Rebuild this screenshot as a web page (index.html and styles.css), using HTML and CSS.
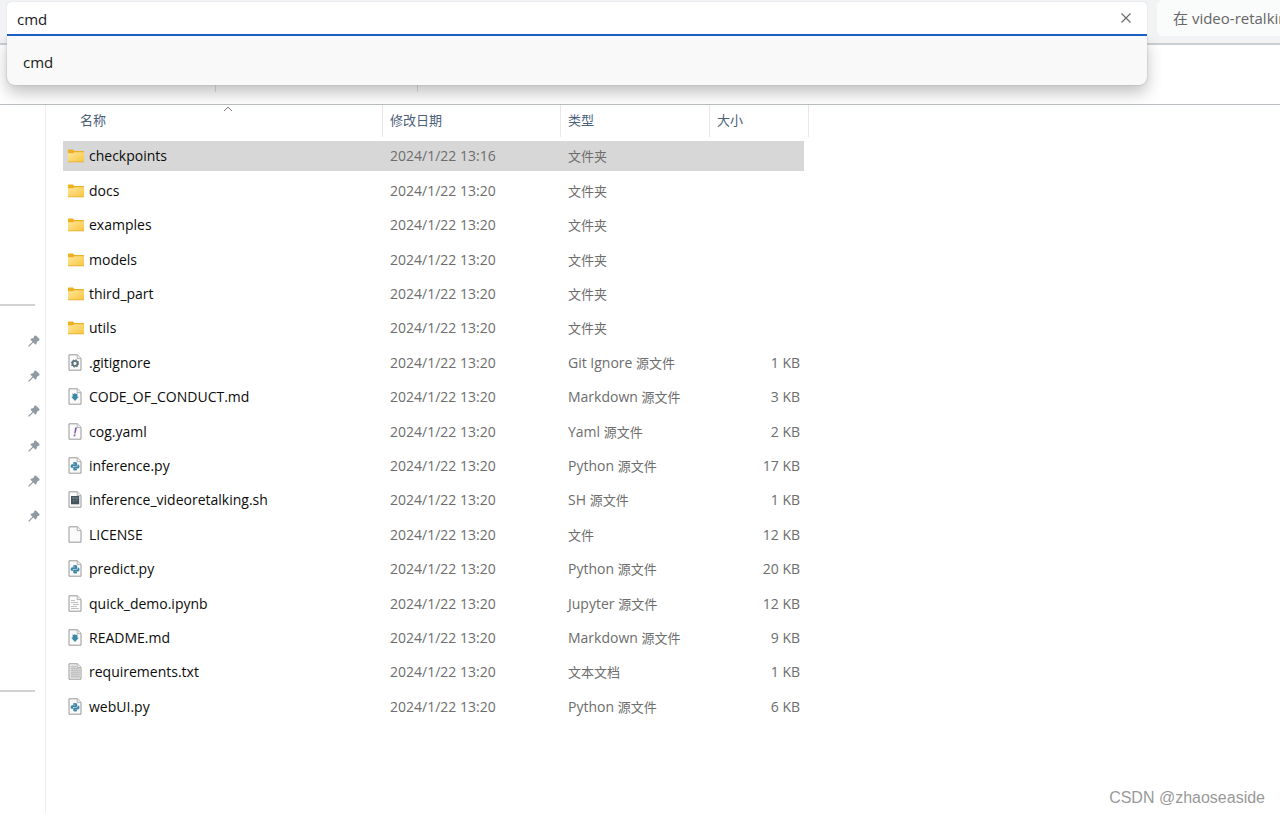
FILE: index.html
```html
<!DOCTYPE html>
<html lang="zh-CN">
<head>
<meta charset="utf-8">
<title>video-retalking</title>
<link rel="stylesheet" href="styles.css">
</head>
<body>
<svg class="defs" aria-hidden="true">
  <defs>
    <linearGradient id="gold" x1="0" y1="0" x2="1" y2="1">
      <stop offset="0" stop-color="#ffe69a"/><stop offset="1" stop-color="#f8c63f"/>
    </linearGradient>
    <symbol id="folder" viewBox="0 0 16 14">
      <path d="M0 1.2Q0 .5.8.5H5l1.3 1.6H15.4Q16 2.1 16 2.8V6H0z" fill="#eeb01f"/>
      <path d="M0 4.2H5.2L6.4 3.2H16V12.6Q16 13 15.6 13H.4Q0 13 0 12.6z" fill="url(#gold)"/>
      <path d="M0 12.5H16V12.7Q16 13.3 15.4 13.3H.6Q0 13.3 0 12.7z" fill="#e3a92b"/>
    </symbol>
    <symbol id="page" viewBox="0 0 14 17">
      <path d="M1 .8H9.4L13 4.4V16.2H1z" fill="#fbfbfb" stroke="#989898"/>
      <path d="M9.2 1V4.6H13" fill="#eee" stroke="#a4a4a4" stroke-width=".8"/>
    </symbol>
    <symbol id="gear" viewBox="0 0 14 17">
      <use href="#page"/>
      <circle cx="7" cy="9.4" r="2.5" fill="none" stroke="#5c717b" stroke-width="1.8"/>
      <circle cx="7" cy="9.4" r="3.6" fill="none" stroke="#5c717b" stroke-width="1.1" stroke-dasharray="1.4 1.427"/>
    </symbol>
    <symbol id="markdown" viewBox="0 0 14 17">
      <use href="#page"/>
      <path d="M4.6 5.2L5.8 6.1L7 5.2L8.2 6.1L9.4 5.2V8.8H10.8L7 13L3.2 8.8H4.6z" fill="#3f87a8"/>
    </symbol>
    <symbol id="yaml" viewBox="0 0 14 17">
      <use href="#page"/>
      <path d="M7.1 4.6H9L7.5 10.4H6.2zM5.9 11.6H7.6L7.2 13.2H5.5z" fill="#8452b0"/>
    </symbol>
    <symbol id="python" viewBox="0 0 14 17">
      <use href="#page"/>
      <path d="M5 6.2Q5 5 6.8 5Q9.2 5 9.2 6.4V8.2Q9.2 9 8.2 9H6Q4.8 9 4.8 10.2V11H4Q2.6 11 2.6 9.1Q2.6 7.2 4.2 7.2H7V6.8H5z" fill="#3f87a8"/>
      <path d="M9 12.4Q9 13.6 7.2 13.6Q5.2 13.6 5.2 12.2V10.6Q5.2 9.6 6.2 9.6H8.2Q9.7 9.6 9.7 8.2V7.4H10.2Q11.5 7.4 11.5 9.4Q11.5 11.4 10 11.4H7.2V11.8H9z" fill="#3f87a8"/>
    </symbol>
    <symbol id="shell" viewBox="0 0 14 17">
      <use href="#page"/>
      <path d="M3 5H11.2V13.3H3z" fill="#44535c"/>
      <path d="M3.8 7H10.4" stroke="#8e9aa1" stroke-width=".8"/>
      <path d="M5 9L6.2 10L5 11M7.2 9.2H9.4" fill="none" stroke="#7c8a92" stroke-width=".8"/>
    </symbol>
    <symbol id="notebook" viewBox="0 0 14 17">
      <use href="#page"/>
      <path d="M3 5.5H7M3 7.5H10M5 9.5H11M3 11.5H9M3 13.5H11" stroke="#b9b9b9" stroke-width=".9"/>
    </symbol>
    <symbol id="text" viewBox="0 0 14 17">
      <use href="#page"/>
      <path d="M2.5 2.5H8.5V5H12V15H2.5z" fill="#d2d2d2"/>
      <path d="M2.5 3.5H8.5M2.5 5.5H11.5M2.5 7.5H11.5M2.5 9.5H11.5M2.5 11.5H11.5M2.5 13.5H11.5" stroke="#bcbcbc" stroke-width=".8"/>
    </symbol>
    <symbol id="pin" viewBox="0 0 12 12">
      <path d="M6.5.8Q7.3.1 8.1.8L11.4 4Q12 4.9 11.1 5.4L9.2 6.4L8.3 9Q7.9 9.9 7.1 9.2L5.2 7.4L1.4 11.4L.3 11.6L.6 10.5L4.5 6.7L2.7 4.9Q2.1 4.1 3 3.8L5.5 3z" fill="#8f9aa3"/>
    </symbol>
  </defs>
</svg>
<div class="window">
  <header class="topbar">
    <div class="address">
      <input class="address-input" type="text" value="cmd" aria-label="地址">
      <button class="clear" type="button" aria-label="清除">
        <svg width="12" height="12" viewBox="0 0 12 12"><path d="M1.5 1.5L10.5 10.5M10.5 1.5L1.5 10.5" stroke="#686868" stroke-width="1.1"/></svg>
      </button>
      <div class="suggestions"><button class="suggestion" type="button">cmd</button></div>
    </div>
    <input class="search" type="text" placeholder="在 video-retalking 中搜索" aria-label="搜索">
  </header>
  <div class="toolbar"><span class="divider"></span><span class="divider"></span></div>
  <div class="content">
    <aside class="sidebar">
      <hr>
      <div class="pins">
        <svg class="pin"><use href="#pin"/></svg>
        <svg class="pin"><use href="#pin"/></svg>
        <svg class="pin"><use href="#pin"/></svg>
        <svg class="pin"><use href="#pin"/></svg>
        <svg class="pin"><use href="#pin"/></svg>
        <svg class="pin"><use href="#pin"/></svg>
      </div>
      <hr>
    </aside>
    <main class="listing">
      <table class="files">
        <colgroup><col class="col-name"><col class="col-date"><col class="col-type"><col class="col-size"></colgroup>
        <thead><tr>
          <th scope="col" class="sorted">名称<svg class="sort" width="10" height="6" viewBox="0 0 10 6"><path d="M1 5L5 1.2L9 5" fill="none" stroke="#777"/></svg></th>
          <th scope="col">修改日期</th><th scope="col">类型</th><th scope="col">大小</th>
        </tr></thead>
        <tbody>
          <tr class="selected"><td><svg class="icon folder"><use href="#folder"/></svg>checkpoints</td><td>2024/1/22 13:16</td><td><span class="zh">文件夹</span></td><td></td></tr>
          <tr><td><svg class="icon folder"><use href="#folder"/></svg>docs</td><td>2024/1/22 13:20</td><td><span class="zh">文件夹</span></td><td></td></tr>
          <tr><td><svg class="icon folder"><use href="#folder"/></svg>examples</td><td>2024/1/22 13:20</td><td><span class="zh">文件夹</span></td><td></td></tr>
          <tr><td><svg class="icon folder"><use href="#folder"/></svg>models</td><td>2024/1/22 13:20</td><td><span class="zh">文件夹</span></td><td></td></tr>
          <tr><td><svg class="icon folder"><use href="#folder"/></svg>third_part</td><td>2024/1/22 13:20</td><td><span class="zh">文件夹</span></td><td></td></tr>
          <tr><td><svg class="icon folder"><use href="#folder"/></svg>utils</td><td>2024/1/22 13:20</td><td><span class="zh">文件夹</span></td><td></td></tr>
          <tr><td><svg class="icon"><use href="#gear"/></svg>.gitignore</td><td>2024/1/22 13:20</td><td>Git Ignore <span class="zh">源文件</span></td><td>1 KB</td></tr>
          <tr><td><svg class="icon"><use href="#markdown"/></svg>CODE_OF_CONDUCT.md</td><td>2024/1/22 13:20</td><td>Markdown <span class="zh">源文件</span></td><td>3 KB</td></tr>
          <tr><td><svg class="icon"><use href="#yaml"/></svg>cog.yaml</td><td>2024/1/22 13:20</td><td>Yaml <span class="zh">源文件</span></td><td>2 KB</td></tr>
          <tr><td><svg class="icon"><use href="#python"/></svg>inference.py</td><td>2024/1/22 13:20</td><td>Python <span class="zh">源文件</span></td><td>17 KB</td></tr>
          <tr><td><svg class="icon"><use href="#shell"/></svg>inference_videoretalking.sh</td><td>2024/1/22 13:20</td><td>SH <span class="zh">源文件</span></td><td>1 KB</td></tr>
          <tr><td><svg class="icon"><use href="#page"/></svg>LICENSE</td><td>2024/1/22 13:20</td><td><span class="zh">文件</span></td><td>12 KB</td></tr>
          <tr><td><svg class="icon"><use href="#python"/></svg>predict.py</td><td>2024/1/22 13:20</td><td>Python <span class="zh">源文件</span></td><td>20 KB</td></tr>
          <tr><td><svg class="icon"><use href="#notebook"/></svg>quick_demo.ipynb</td><td>2024/1/22 13:20</td><td>Jupyter <span class="zh">源文件</span></td><td>12 KB</td></tr>
          <tr><td><svg class="icon"><use href="#markdown"/></svg>README.md</td><td>2024/1/22 13:20</td><td>Markdown <span class="zh">源文件</span></td><td>9 KB</td></tr>
          <tr><td><svg class="icon"><use href="#text"/></svg>requirements.txt</td><td>2024/1/22 13:20</td><td><span class="zh">文本文档</span></td><td>1 KB</td></tr>
          <tr><td><svg class="icon"><use href="#python"/></svg>webUI.py</td><td>2024/1/22 13:20</td><td>Python <span class="zh">源文件</span></td><td>6 KB</td></tr>
        </tbody>
      </table>
    </main>
  </div>
  <div class="watermark">CSDN @zhaoseaside</div>
</div>
</body>
</html>
```
FILE: styles.css
```css
* { box-sizing: border-box; }
body {
  margin: 0;
  background: #fff;
  color: #1a1a1a;
  font-family: "Open Sans", "Noto Sans CJK SC", sans-serif;
  font-size: 14px;
}
button, input { font: inherit; color: inherit; border: 0; outline: 0; }
.defs { position: absolute; width: 0; height: 0; }
.window {
  position: relative;
  display: flex;
  flex-direction: column;
  min-height: 100vh;
  overflow: hidden;
}

.topbar {
  display: flex;
  gap: 10px;
  height: 45px;
  padding: 0 0 0 7px;
  background: #f1f3f5;
  border-bottom: 2px solid #c9cfd2;
}
.address {
  position: relative;
  z-index: 2;
  flex: 1;
  display: flex;
  align-items: center;
  height: 34px;
  margin-top: 2px;
  background: #fff;
  border-bottom: 2px solid #1b5fc4;
  border-radius: 4px 4px 0 0;
  box-shadow: 0 0 1px #b5b9bc;
  font-size: 15px;
}
.address-input {
  flex: 1;
  min-width: 0;
  padding: 2px 10px 0;
  background: transparent;
}
.clear {
  display: flex;
  padding: 0 15px;
  background: transparent;
}
.suggestions {
  position: absolute;
  top: 100%;
  left: 0;
  right: 0;
  margin-top: 2px;
  background: #f9f9f9;
  border-radius: 0 0 8px 8px;
  box-shadow: 0 0 2px #aaa, 0 8px 16px rgba(0, 0, 0, .24);
  clip-path: inset(0 -24px -32px -24px);
}
.suggestion {
  display: block;
  width: 100%;
  height: 49px;
  padding: 2px 16px 0;
  background: transparent;
  text-align: left;
}
.search {
  width: 123px;
  height: 36px;
  padding: 0 0 0 16px;
  background: #fafbfb;
  border-radius: 6px 0 0 6px;
  font-size: 15px;
}
.search::placeholder { color: #666; opacity: 1; }

.toolbar {
  display: flex;
  gap: 201px;
  height: 60px;
  padding: 0 0 12px 215px;
  border-bottom: 1px solid #b9bfc2;
}
.divider { width: 1px; background: #ddd; }

.content { flex: 1; display: flex; }
.sidebar {
  width: 46px;
  padding-top: 199px;
  border-right: 1px solid #efefef;
}
hr { width: 35px; height: 2px; margin: 0; border: 0; background: #d2d2d2; }
.pins {
  display: flex;
  flex-direction: column;
  gap: 23px;
  align-items: flex-end;
  padding: 29px 5px 168px 0;
}
.pin { width: 12px; height: 12px; }

.listing { flex: 1; padding-left: 17px; }
.files {
  width: 746px;
  table-layout: fixed;
  border-collapse: separate;
  border-spacing: 0 4px;
  margin-top: -4px;
}
.col-name { width: 320px; }
.col-date { width: 178px; }
.col-type { width: 149px; }
th {
  position: relative;
  height: 32px;
  padding: 0 6px 4px;
  border-right: 1px solid #e8e8e8;
  color: #4c607a;
  font-size: 13px;
  font-weight: 400;
  text-align: left;
}
th + th { padding-left: 7px; }
th.sorted { padding-left: 17px; }
.sort { position: absolute; top: 1px; left: 50%; }
td {
  height: 30px;
  padding: 0 7px;
  color: #6d6d6d;
  line-height: 20px;
  white-space: nowrap;
}
tr:nth-child(5n + 2) td, tr:nth-child(5n + 4) td { height: 31px; }
td:first-child { padding-left: 5px; color: #0c0c0c; }
td:last-child {
  padding-right: 4px;
  border-right: 5px solid transparent;
  background-clip: padding-box;
  text-align: right;
}
.selected td { background-color: #d7d7d7; }
.zh { font-size: 13px; }
.icon {
  width: 14px;
  height: 17px;
  margin-right: 7px;
  vertical-align: -3px;
}
.icon.folder { width: 16px; height: 14px; margin-right: 5px; vertical-align: -2px; }

.watermark {
  position: absolute;
  right: 15px;
  bottom: 5px;
  color: #999;
  font-family: "Liberation Sans", Arial, sans-serif;
  font-size: 16px;
  line-height: 20px;
}
```
